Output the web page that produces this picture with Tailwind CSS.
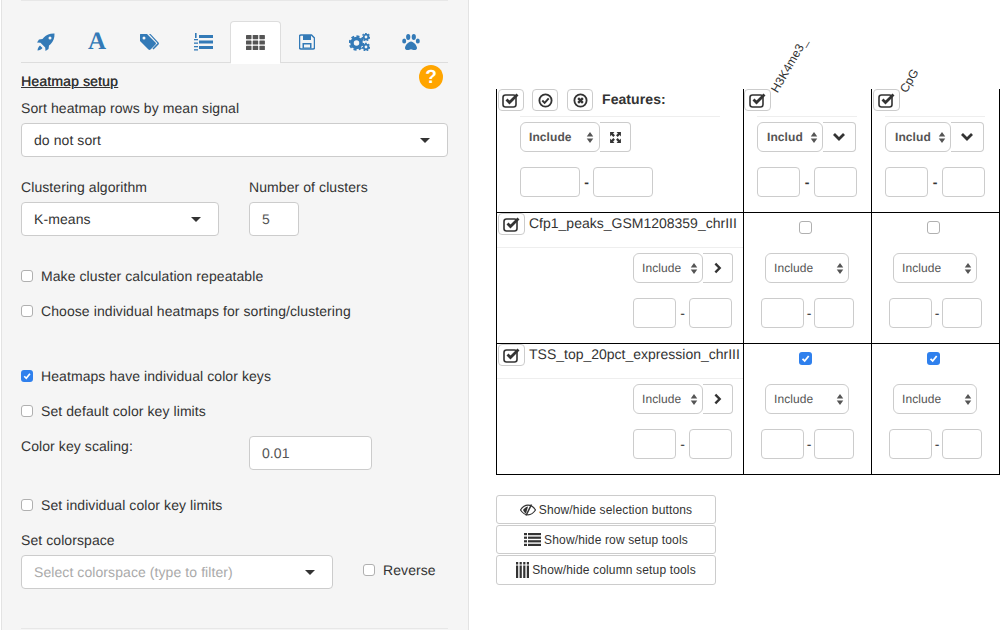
<!DOCTYPE html>
<html lang="en">
<head>
  <meta charset="UTF-8" />
  <title>Heatmap setup</title>
  <script src="https://cdn.jsdelivr.net/npm/@tailwindcss/browser@4"></script>
</head>
<body class="bg-white text-[#333] text-[14px] tracking-[0.08px] font-['Liberation_Sans',Arial,sans-serif] [text-rendering:geometricPrecision]">
  <svg class="hidden">
    <symbol id="check-box" viewBox="0 0 18 16"><rect x="1" y="3" width="13" height="12" rx="2.5" fill="none" stroke="currentColor" stroke-width="1.6"/><path d="M4.500 7.500l3 3L15.500 2.500" fill="none" stroke="currentColor" stroke-width="2.800"/></symbol>
    <symbol id="updown" viewBox="0 0 8 14"><path d="M4 1l3.500 5h-7zM4 13l3.500-5h-7z" fill="#555"/></symbol>
    <symbol id="chev-down" viewBox="0 0 14 10"><path d="M2 2l5 5 5-5" fill="none" stroke="#333" stroke-width="2.800"/></symbol>
    <symbol id="chev-right" viewBox="0 0 10 14"><path d="M2.500 2l5 5-5 5" fill="none" stroke="#333" stroke-width="2.800"/></symbol>
    <symbol id="tick" viewBox="0 0 13 13"><path d="M3.500 6.800l2.200 2.200 4-5" fill="none" stroke="#fff" stroke-width="1.800"/></symbol>
  </svg>

  <div class="flex h-[630px] overflow-hidden">
    <!-- settings panel -->
    <div class="w-[468px] h-[630px] ml-[1px] bg-[#f5f5f5] border-x border-[#e3e3e3] pl-[19px] pr-[20px] shrink-0">
      <div class="h-[1px] bg-[#e7e7e7]"></div>

      <!-- tabs -->
      <div class="flex h-[42px] mt-[20px] border-b border-[#ddd] text-[#337ab7]">
        <div class="w-[50px] flex items-center justify-center">
          <svg width="18" height="18" viewBox="0 0 18 18" fill="currentColor"><path d="M17.500.5C13 .3 9.500 1.700 6.800 4.500L5.500 6 2 6.500 0 9.500l3.500.3 4.700 4.700.3 3.500 3-2 .5-3.500 1.500-1.300C16.300 8.500 17.700 5 17.500.5zM13 6.500a1.500 1.500 0 1 1 0-3 1.500 1.500 0 0 1 0 3zM3 12.500c-1.500 1-2.300 3-2.500 5 2-.2 4-1 5-2.500z"/></svg>
        </div>
        <div class="w-[52px] flex items-center justify-center font-['Liberation_Serif',serif] font-bold text-[25px] leading-none">A</div>
        <div class="w-[52px] flex items-center justify-center">
          <svg width="21" height="18" viewBox="0 0 21 18" fill="currentColor"><path d="M1.500 1h6.500l8.500 8.500c.6.600.6 1.500 0 2L11.500 16.500c-.6.600-1.500.6-2 0L1 8V2.500C1 1.700 1 1 1.500 1zM5 3.500a1.500 1.500 0 1 0 0 3 1.500 1.500 0 0 0 0-3z" fill-rule="evenodd"/><path d="M10 1h1.500l8 8.500c.6.600.6 1.500 0 2L14.500 16.500l-1-1 5-5.200z"/></svg>
        </div>
        <div class="w-[55px] flex items-center justify-center">
          <svg width="20" height="18" viewBox="0 0 20 18" fill="currentColor"><rect x="6" y="2" width="14" height="3"/><rect x="6" y="7.500" width="14" height="3"/><rect x="6" y="13" width="14" height="3"/><rect x="2" y="0" width="1.600" height="5"/><rect x="1" y="6" width="4" height="1.300"/><rect x="1" y="9.500" width="4" height="1.300"/><rect x="1" y="13" width="4" height="1.300"/><rect x="1" y="16.200" width="4" height="1.300"/></svg>
        </div>
        <div class="w-[51px] h-[42px] bg-[#fff] border border-[#ddd] border-b-0 rounded-t-[4px] flex items-center justify-center text-[#555] relative">
          <svg width="19" height="15" viewBox="0 0 19 15" fill="#555"><rect width="5.500" height="4.200" rx=".6"/><rect x="6.700" width="5.500" height="4.200" rx=".6"/><rect x="13.400" width="5.500" height="4.200" rx=".6"/><rect y="5.400" width="5.500" height="4.200" rx=".6"/><rect x="6.700" y="5.400" width="5.500" height="4.200" rx=".6"/><rect x="13.400" y="5.400" width="5.500" height="4.200" rx=".6"/><rect y="10.800" width="5.500" height="4.200" rx=".6"/><rect x="6.700" y="10.800" width="5.500" height="4.200" rx=".6"/><rect x="13.400" y="10.800" width="5.500" height="4.200" rx=".6"/></svg>
          <div class="absolute left-0 right-0 bottom-[-1px] h-[1px] bg-white"></div>
        </div>
        <div class="w-[52px] flex items-center justify-center">
          <svg width="16" height="16" viewBox="0 0 16 16"><path d="M1.500 1H12l3 3v9.500c0 .8-.7 1.500-1.500 1.500h-12C.7 15 0 14.300 0 13.500v-11C0 1.700.7 1 1.500 1z" transform="translate(.5 0)" fill="none" stroke="currentColor" stroke-width="1.500"/><rect x="4" y="1" width="8" height="5" fill="currentColor"/><rect x="3.500" y="9" width="9" height="5.500" fill="currentColor"/><rect x="5" y="10.500" width="6" height="3" fill="#f5f5f5"/></svg>
        </div>
        <div class="w-[52px] flex items-center justify-center">
          <svg width="21" height="18" viewBox="0 0 21 18"><circle cx="7.500" cy="10" r="4.500" fill="none" stroke="currentColor" stroke-width="3.500"/><circle cx="7.500" cy="10" r="6.800" fill="none" stroke="currentColor" stroke-width="2" stroke-dasharray="3 2.300"/><circle cx="17" cy="4" r="2.300" fill="none" stroke="currentColor" stroke-width="1.800"/><circle cx="17" cy="4" r="3.700" fill="none" stroke="currentColor" stroke-width="1.200" stroke-dasharray="1.800 1.400"/><circle cx="17" cy="14" r="2.300" fill="none" stroke="currentColor" stroke-width="1.800"/><circle cx="17" cy="14" r="3.700" fill="none" stroke="currentColor" stroke-width="1.200" stroke-dasharray="1.800 1.400"/></svg>
        </div>
        <div class="w-[52px] flex items-center justify-center">
          <svg width="18" height="16" viewBox="0 0 18 16" fill="currentColor"><ellipse cx="2.200" cy="7" rx="2" ry="2.500"/><ellipse cx="6.200" cy="3" rx="2.100" ry="2.900"/><ellipse cx="11.800" cy="3" rx="2.100" ry="2.900"/><ellipse cx="15.800" cy="7" rx="2" ry="2.500"/><path d="M9 7.500c2.500 0 6 4 6 6.500 0 1.500-1.200 2-2.500 2-1.500 0-2.300-.8-3.500-.8s-2 .8-3.500.8C4.200 16 3 15.500 3 14c0-2.500 3.500-6.500 6-6.500z"/></svg>
        </div>
      </div>

      <!-- heading -->
      <div class="flex justify-between h-[24px] pr-[5px]">
        <span class="mt-[10px] font-medium underline leading-[16px] tracking-[0.15px] [text-shadow:0.3px_0_0_#333]">Heatmap setup</span>
        <div class="w-[24px] h-[24px] mt-[2px] rounded-full bg-[#ffa500] flex items-center justify-center text-white font-bold text-[19px] leading-none">?</div>
      </div>

      <div class="mt-[11px] leading-[20px]">Sort heatmap rows by mean signal</div>
      <div class="mt-[5px] h-[34px] bg-white border border-[#ccc] rounded-[4px] flex items-center justify-between pl-[12px] pr-[17px]">
        <span>do not sort</span><span class="w-0 h-0 border-x-[5px] border-x-transparent border-t-[5px] border-t-[#333]"></span>
      </div>

      <div class="mt-[20px] flex">
        <div class="w-[198px]">
          <div class="leading-[20px]">Clustering algorithm</div>
          <div class="mt-[5px] h-[34px] bg-white border border-[#ccc] rounded-[4px] flex items-center justify-between pl-[12px] pr-[17px]">
            <span>K-means</span><span class="w-0 h-0 border-x-[5px] border-x-transparent border-t-[5px] border-t-[#333]"></span>
          </div>
        </div>
        <div class="ml-[30px]">
          <div class="leading-[20px]">Number of clusters</div>
          <div class="mt-[5px] w-[50px] h-[34px] bg-white border border-[#ccc] rounded-[4px] flex items-center pl-[12px] text-[#555]">5</div>
        </div>
      </div>

      <label class="flex items-center h-[20px] mt-[30px]"><input type="checkbox" class="appearance-none w-[12px] h-[12px] bg-white border border-[#b0b0b0] rounded-[3px] mr-[8px]" />Make cluster calculation repeatable</label>
      <label class="flex items-center h-[20px] mt-[15px]"><input type="checkbox" class="appearance-none w-[12px] h-[12px] bg-white border border-[#b0b0b0] rounded-[3px] mr-[8px]" />Choose individual heatmaps for sorting/clustering</label>
      <label class="flex items-center h-[20px] mt-[45px]"><span class="w-[12px] h-[12px] bg-[#2f80ed] rounded-[3px] mr-[8px] flex"><svg width="12" height="12"><use href="#tick"/></svg></span>Heatmaps have individual color keys</label>
      <label class="flex items-center h-[20px] mt-[15px]"><input type="checkbox" class="appearance-none w-[12px] h-[12px] bg-white border border-[#b0b0b0] rounded-[3px] mr-[8px]" />Set default color key limits</label>

      <div class="flex mt-[15px]">
        <div class="w-[228px] leading-[20px]">Color key scaling:</div>
        <div class="w-[123px] h-[34px] bg-white border border-[#ccc] rounded-[4px] flex items-center pl-[12px] text-[#555]">0.01</div>
      </div>

      <label class="flex items-center h-[20px] mt-[25px]"><input type="checkbox" class="appearance-none w-[12px] h-[12px] bg-white border border-[#b0b0b0] rounded-[3px] mr-[8px]" />Set individual color key limits</label>
      <div class="mt-[15px] leading-[20px]">Set colorspace</div>
      <div class="flex mt-[5px]">
        <div class="w-[312px] h-[34px] bg-white border border-[#ccc] rounded-[4px] flex items-center justify-between pl-[12px] pr-[17px]">
          <span class="text-[#aaa]">Select colorspace (type to filter)</span><span class="w-0 h-0 border-x-[5px] border-x-transparent border-t-[5px] border-t-[#333]"></span>
        </div>
        <label class="flex items-center h-[20px] mt-[5px] ml-[30px]"><input type="checkbox" class="appearance-none w-[12px] h-[12px] bg-white border border-[#b0b0b0] rounded-[3px] mr-[8px]" />Reverse</label>
      </div>
      <div class="h-[1px] bg-[#e7e7e7] mt-[39px]"></div>
    </div>

    <!-- selection table -->
    <div class="ml-[27px] w-[504px] shrink-0 relative">
      <div class="absolute left-[284px] top-[81px] origin-bottom-left rotate-[-60deg] text-[12px] leading-[14px] whitespace-nowrap">H3K4me3_</div>
      <div class="absolute left-[413px] top-[81px] origin-bottom-left rotate-[-60deg] text-[12px] leading-[14px] whitespace-nowrap">CpG</div>

      <div class="mt-[89px] grid grid-cols-[247px_128px_127px] grid-rows-[124px_131px_130px] border-x border-b border-black">
        <!-- header row -->
        <div class="border-r border-b border-black">
          <div class="flex items-center h-[22px] pl-[1px]">
            <button class="w-[26px] h-[22px] bg-white border border-[#ccc] rounded-[4px] flex items-center justify-center"><svg width="18" height="16"><use href="#check-box"/></svg></button>
            <button class="w-[26px] h-[22px] ml-[8px] bg-white border border-[#ccc] rounded-[4px] flex items-center justify-center"><svg width="15" height="15" viewBox="0 0 14 14"><circle cx="7" cy="7" r="5.700" fill="none" stroke="#333" stroke-width="1.700"/><path d="M4 7l2.200 2.200L10 5" fill="none" stroke="#333" stroke-width="1.800"/></svg></button>
            <button class="w-[26px] h-[22px] ml-[9px] bg-white border border-[#ccc] rounded-[4px] flex items-center justify-center"><svg width="15" height="15" viewBox="0 0 14 14"><circle cx="7" cy="7" r="5.700" fill="none" stroke="#333" stroke-width="1.700"/><path d="M4.800 4.800l4.400 4.400M9.200 4.800L4.800 9.200" stroke="#333" stroke-width="2.200"/></svg></button>
            <span class="ml-[9px] font-bold mb-[2px]">Features:</span>
          </div>
          <div class="ml-[23px] w-[200px] h-[1px] mt-[5px] bg-[#eee]"></div>
          <div class="flex ml-[23px] mt-[5px]">
            <div class="w-[80px] h-[30px] bg-white border border-[#ccc] rounded-[6px] flex items-center justify-between pl-[8px] pr-[5px] text-[12px] font-bold text-[#555]">Include<svg width="8" height="13"><use href="#updown"/></svg></div>
            <button class="w-[31px] h-[30px] bg-white border border-l-0 border-[#ccc] rounded-r-[4px] flex items-center justify-center"><svg width="13" height="13" viewBox="0 0 12 12" fill="#333"><path d="M1 1h4L3.800 2.200 5.500 4 4 5.500 2.200 3.800 1 5zM11 1v4L9.800 3.800 8 5.500 6.500 4l1.700-1.800L7 1zM1 11V7l1.200 1.200L4 6.500 5.500 8 3.800 9.800 5 11zM11 11H7l1.200-1.200L6.500 8 8 6.500l1.800 1.700L11 7z"/></svg></button>
          </div>
          <div class="flex items-center ml-[23px] mt-[15px]">
            <div class="w-[60px] h-[30px] bg-white border border-[#ccc] rounded-[4px]"></div>
            <span class="w-[13px] text-center font-bold leading-none">-</span>
            <div class="w-[60px] h-[30px] bg-white border border-[#ccc] rounded-[4px]"></div>
          </div>
        </div>
        <div class="border-r border-b border-black">
          <button class="w-[27px] h-[22px] bg-white border border-[#ccc] rounded-[4px] flex items-center justify-center"><svg width="18" height="16"><use href="#check-box"/></svg></button>
          <div class="ml-[13px] w-[100px] h-[1px] mt-[5px] bg-[#eee]"></div>
          <div class="flex ml-[13px] mt-[5px]">
            <div class="w-[66px] h-[30px] bg-white border border-[#ccc] rounded-[6px] flex items-center justify-between pl-[9px] pr-[4px] text-[12px] font-bold text-[#555]">Includ<svg width="8" height="13"><use href="#updown"/></svg></div>
            <button class="w-[33px] h-[30px] bg-white border border-l-0 border-[#ccc] rounded-r-[4px] flex items-center justify-center"><svg width="14" height="10"><use href="#chev-down"/></svg></button>
          </div>
          <div class="flex items-center ml-[13px] mt-[15px]">
            <div class="w-[43px] h-[30px] bg-white border border-[#ccc] rounded-[4px]"></div>
            <span class="w-[14px] text-center font-bold leading-none">-</span>
            <div class="w-[43px] h-[30px] bg-white border border-[#ccc] rounded-[4px]"></div>
          </div>
        </div>
        <div class="border-b border-black">
          <button class="w-[27px] h-[22px] ml-[1px] bg-white border border-[#ccc] rounded-[4px] flex items-center justify-center"><svg width="18" height="16"><use href="#check-box"/></svg></button>
          <div class="ml-[13px] w-[100px] h-[1px] mt-[5px] bg-[#eee]"></div>
          <div class="flex ml-[13px] mt-[5px]">
            <div class="w-[66px] h-[30px] bg-white border border-[#ccc] rounded-[6px] flex items-center justify-between pl-[9px] pr-[4px] text-[12px] font-bold text-[#555]">Includ<svg width="8" height="13"><use href="#updown"/></svg></div>
            <button class="w-[33px] h-[30px] bg-white border border-l-0 border-[#ccc] rounded-r-[4px] flex items-center justify-center"><svg width="14" height="10"><use href="#chev-down"/></svg></button>
          </div>
          <div class="flex items-center ml-[13px] mt-[15px]">
            <div class="w-[43px] h-[30px] bg-white border border-[#ccc] rounded-[4px]"></div>
            <span class="w-[14px] text-center font-bold leading-none">-</span>
            <div class="w-[43px] h-[30px] bg-white border border-[#ccc] rounded-[4px]"></div>
          </div>
        </div>

        <!-- row 1 -->
        <div class="border-r border-b border-black">
          <div class="flex items-center h-[22px] pl-[1px]">
            <button class="w-[27px] h-[22px] bg-white border border-[#ccc] rounded-[4px] flex items-center justify-center"><svg width="18" height="16"><use href="#check-box"/></svg></button>
            <span class="ml-[4px] mb-[2px] tracking-normal">Cfp1_peaks_GSM1208359_chrIII</span>
          </div>
          <div class="h-[1px] mt-[12px] bg-[#eee]"></div>
          <div class="flex justify-end mr-[10px] mt-[5px]">
            <div class="w-[70px] h-[30px] bg-white border border-[#ccc] rounded-[6px] flex items-center justify-between pl-[8px] pr-[4px] text-[12px] text-[#555]">Include<svg width="8" height="13"><use href="#updown"/></svg></div>
            <button class="w-[30px] h-[30px] bg-white border border-l-0 border-[#ccc] rounded-r-[4px] flex items-center justify-center"><svg width="9" height="12"><use href="#chev-right"/></svg></button>
          </div>
          <div class="flex justify-end items-center mr-[11px] mt-[15px]">
            <div class="w-[43px] h-[30px] bg-white border border-[#ccc] rounded-[4px]"></div>
            <span class="w-[13px] text-center leading-none">-</span>
            <div class="w-[43px] h-[30px] bg-white border border-[#ccc] rounded-[4px]"></div>
          </div>
        </div>
        <div class="border-r border-b border-black">
          <div class="h-[30px] pt-[8px] pl-[55px] flex"><input type="checkbox" class="appearance-none w-[13px] h-[13px] bg-white border border-[#b0b0b0] rounded-[3px]" /></div>
          <div class="h-[10px]"></div>
          <div class="ml-[21px] w-[84px] h-[30px] bg-white border border-[#ccc] rounded-[6px] flex items-center justify-between pl-[8px] pr-[4px] text-[12px] text-[#555]">Include<svg width="8" height="13"><use href="#updown"/></svg></div>
          <div class="flex items-center ml-[17px] mt-[15px]">
            <div class="w-[43px] h-[30px] bg-white border border-[#ccc] rounded-[4px]"></div>
            <span class="w-[10px] text-center leading-none">-</span>
            <div class="w-[40px] h-[30px] bg-white border border-[#ccc] rounded-[4px]"></div>
          </div>
        </div>
        <div class="border-b border-black">
          <div class="h-[30px] pt-[8px] pl-[55px] flex"><input type="checkbox" class="appearance-none w-[13px] h-[13px] bg-white border border-[#b0b0b0] rounded-[3px]" /></div>
          <div class="h-[10px]"></div>
          <div class="ml-[21px] w-[84px] h-[30px] bg-white border border-[#ccc] rounded-[6px] flex items-center justify-between pl-[8px] pr-[4px] text-[12px] text-[#555]">Include<svg width="8" height="13"><use href="#updown"/></svg></div>
          <div class="flex items-center ml-[17px] mt-[15px]">
            <div class="w-[43px] h-[30px] bg-white border border-[#ccc] rounded-[4px]"></div>
            <span class="w-[10px] text-center leading-none">-</span>
            <div class="w-[40px] h-[30px] bg-white border border-[#ccc] rounded-[4px]"></div>
          </div>
        </div>

        <!-- row 2 -->
        <div class="border-r border-black">
          <div class="flex items-center h-[22px] pl-[1px]">
            <button class="w-[27px] h-[22px] bg-white border border-[#ccc] rounded-[4px] flex items-center justify-center"><svg width="18" height="16"><use href="#check-box"/></svg></button>
            <span class="ml-[4px] mb-[2px] tracking-normal whitespace-nowrap">TSS_top_20pct_expression_chrIII</span>
          </div>
          <div class="h-[1px] mt-[12px] bg-[#eee]"></div>
          <div class="flex justify-end mr-[10px] mt-[5px]">
            <div class="w-[70px] h-[30px] bg-white border border-[#ccc] rounded-[6px] flex items-center justify-between pl-[8px] pr-[4px] text-[12px] text-[#555]">Include<svg width="8" height="13"><use href="#updown"/></svg></div>
            <button class="w-[30px] h-[30px] bg-white border border-l-0 border-[#ccc] rounded-r-[4px] flex items-center justify-center"><svg width="9" height="12"><use href="#chev-right"/></svg></button>
          </div>
          <div class="flex justify-end items-center mr-[11px] mt-[15px]">
            <div class="w-[43px] h-[30px] bg-white border border-[#ccc] rounded-[4px]"></div>
            <span class="w-[13px] text-center leading-none">-</span>
            <div class="w-[43px] h-[30px] bg-white border border-[#ccc] rounded-[4px]"></div>
          </div>
        </div>
        <div class="border-r border-black">
          <div class="h-[30px] pt-[8px] pl-[55px] flex"><span class="w-[13px] h-[13px] bg-[#2f80ed] rounded-[3px] flex"><svg width="13" height="13"><use href="#tick"/></svg></span></div>
          <div class="h-[10px]"></div>
          <div class="ml-[21px] w-[84px] h-[30px] bg-white border border-[#ccc] rounded-[6px] flex items-center justify-between pl-[8px] pr-[4px] text-[12px] text-[#555]">Include<svg width="8" height="13"><use href="#updown"/></svg></div>
          <div class="flex items-center ml-[17px] mt-[15px]">
            <div class="w-[43px] h-[30px] bg-white border border-[#ccc] rounded-[4px]"></div>
            <span class="w-[10px] text-center leading-none">-</span>
            <div class="w-[40px] h-[30px] bg-white border border-[#ccc] rounded-[4px]"></div>
          </div>
        </div>
        <div>
          <div class="h-[30px] pt-[8px] pl-[55px] flex"><span class="w-[13px] h-[13px] bg-[#2f80ed] rounded-[3px] flex"><svg width="13" height="13"><use href="#tick"/></svg></span></div>
          <div class="h-[10px]"></div>
          <div class="ml-[21px] w-[84px] h-[30px] bg-white border border-[#ccc] rounded-[6px] flex items-center justify-between pl-[8px] pr-[4px] text-[12px] text-[#555]">Include<svg width="8" height="13"><use href="#updown"/></svg></div>
          <div class="flex items-center ml-[17px] mt-[15px]">
            <div class="w-[43px] h-[30px] bg-white border border-[#ccc] rounded-[4px]"></div>
            <span class="w-[10px] text-center leading-none">-</span>
            <div class="w-[40px] h-[30px] bg-white border border-[#ccc] rounded-[4px]"></div>
          </div>
        </div>
      </div>

      <!-- toggles -->
      <div class="mt-[20px] w-[220px] flex flex-col gap-[1px] text-[12px] tracking-[0.15px]">
        <button class="h-[29px] bg-white border border-[#ccc] rounded-[3px] flex items-center justify-center gap-[3px]">
          <svg width="16" height="12" viewBox="0 0 16 12"><path d="M.5 6C2.500 3 5 1.200 8 1.200S13.500 3 15.500 6c-2 3-4.500 4.800-7.500 4.800S2.500 9 .5 6z" fill="none" stroke="#333" stroke-width="1.200"/><path d="M3 6c1-1.500 2.500-3 5-3.500L6 9.500C4.800 9 3.800 7.500 3 6z" fill="#333"/><path d="M11.500.5L6 11.500" stroke="#333" stroke-width="1.500"/></svg>
          Show/hide selection buttons
        </button>
        <button class="h-[29px] bg-white border border-[#ccc] rounded-[3px] flex items-center justify-center gap-[3px]">
          <svg width="17" height="13" viewBox="0 0 17 13" fill="#333"><rect width="3" height="2.200"/><rect x="4" width="13" height="2.200"/><rect y="3.600" width="3" height="2.200"/><rect x="4" y="3.600" width="13" height="2.200"/><rect y="7.200" width="3" height="2.200"/><rect x="4" y="7.200" width="13" height="2.200"/><rect y="10.800" width="3" height="2.200"/><rect x="4" y="10.800" width="13" height="2.200"/></svg>
          Show/hide row setup tools
        </button>
        <button class="h-[30px] bg-white border border-[#ccc] rounded-[3px] flex items-center justify-center gap-[3px]">
          <svg width="13" height="16" viewBox="0 0 13 16" fill="#333"><rect width="2.200" height="2.500"/><rect y="3.500" width="2.200" height="12.500"/><rect x="3.600" width="2.200" height="2.500"/><rect x="3.600" y="3.500" width="2.200" height="12.500"/><rect x="7.200" width="2.200" height="2.500"/><rect x="7.200" y="3.500" width="2.200" height="12.500"/><rect x="10.800" width="2.200" height="2.500"/><rect x="10.800" y="3.500" width="2.200" height="12.500"/></svg>
          Show/hide column setup tools
        </button>
      </div>
    </div>
  </div>
</body>
</html>
